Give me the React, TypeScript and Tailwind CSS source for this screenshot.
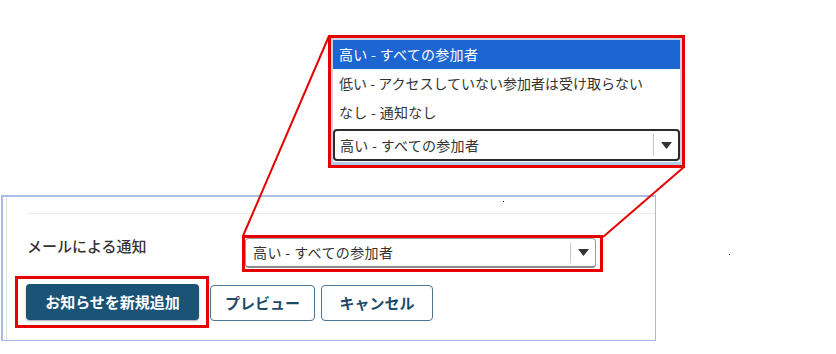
import React from "react";

const font = { fontFamily: '"Noto Sans CJK JP", "Noto Sans", sans-serif' };

function Arrow() {
  return (
    <svg width="11" height="7" viewBox="0 0 11 7">
      <polygon points="0,0 11,0 5.5,7" fill="#333" />
    </svg>
  );
}

export default function App() {
  return (
    <div
      className="relative w-[836px] h-[354px] bg-white overflow-hidden"
      style={font}
    >
      {/* Panel */}
      <div className="pt-[195px] pl-[1px]">
        <div className="w-[655px] h-[146px] border-2 border-[#a7bde6] border-r-[1.5px] border-b-[1.5px] bg-white">
          <div className="h-full border-l border-[#e4e4e4] ml-[3px]">
            <div className="pt-[16px] pl-[20px]">
              <div className="h-px bg-[#ebebeb]" />
            </div>
            <div className="flex items-start mt-[21px]">
              <div className="ml-[20px] w-[215px] text-[15px] leading-[22px] text-[#333] font-medium">
                メールによる通知
              </div>
              <div className="border-[3px] border-[#e60000] pr-[4px] pb-[2px] w-[361px] h-[37px]">
                <div className="flex items-center w-[351px] h-[30px] rounded-[4px] border border-[#9a9a9a] border-b-[2px] border-b-[#8a8a8a] bg-white">
                  <div className="flex-1 pl-[7px] text-[14px] text-[#333] tracking-[0.4px]">
                    高い - すべての参加者
                  </div>
                  <div className="h-[20px] w-px bg-[#c8c8c8]" />
                  <div className="w-[24px] flex justify-center">
                    <Arrow />
                  </div>
                </div>
              </div>
            </div>
            <div className="flex items-start mt-[4px] ml-[8px]">
              <div className="w-[194px] h-[52px] border-[3px] border-[#e60000] pl-[8px] pt-[5px]">
                <div className="w-[173px] h-[36px] rounded-[4px] bg-[#1a5376] shadow-[0_1px_2px_rgba(0,0,0,0.35)] flex items-center justify-center text-white text-[15px] font-bold">
                  お知らせを新規追加
                </div>
              </div>
              <div className="ml-[1px] mt-[9px] w-[105px] h-[36px] rounded-[4px] border-[1.5px] border-[#4b7594] flex items-center justify-center text-[15px] font-bold text-[#1e4a68]">
                プレビュー
              </div>
              <div className="ml-[6px] mt-[9px] w-[112px] h-[36px] rounded-[4px] border-[1.5px] border-[#4b7594] flex items-center justify-center text-[15px] font-bold text-[#1e4a68]">
                キャンセル
              </div>
            </div>
          </div>
        </div>
      </div>

      {/* Magnified callout */}
      <div className="absolute left-[328px] top-[35px] w-[357px] h-[133px] border-[3px] border-[#e60000] bg-white">
        <div className="h-full border-2 border-[#c6d4e6] border-b-[3px] border-b-[#b3cde8] bg-white flex flex-col">
          <div className="h-[29px] bg-[#1d66d2] text-white text-[14px] tracking-[0.3px] flex items-center pl-[6px]">
            高い - すべての参加者
          </div>
          <div className="h-[29px] text-[#333] text-[14px] flex items-center pl-[6px]">
            低い - アクセスしていない参加者は受け取らない
          </div>
          <div className="h-[29px] text-[#333] text-[14px] tracking-[0.3px] flex items-center pl-[6px]">
            なし - 通知なし
          </div>
          <div className="mt-[2px] h-[32px] rounded-[4px] border-2 border-[#2b2b2b] flex items-center bg-white">
            <div className="flex-1 pl-[5px] text-[14px] tracking-[0.3px] text-[#333]">
              高い - すべての参加者
            </div>
            <div className="h-[22px] w-px bg-[#c8c8c8]" />
            <div className="w-[24px] flex justify-center">
              <Arrow />
            </div>
          </div>
        </div>
      </div>

      {/* Annotation lines */}
      <svg
        className="absolute left-0 top-0 pointer-events-none"
        width="836"
        height="354"
      >
        <line x1="243" y1="236" x2="329" y2="36" stroke="#e60000" strokeWidth="2" />
        <line x1="603" y1="237" x2="684" y2="167" stroke="#e60000" strokeWidth="2" />
      </svg>

      {/* stray dots */}
      <div className="absolute left-[503px] top-[201px] w-px h-px bg-black" />
      <div className="absolute left-[729px] top-[254px] w-px h-px bg-black" />
    </div>
  );
}
